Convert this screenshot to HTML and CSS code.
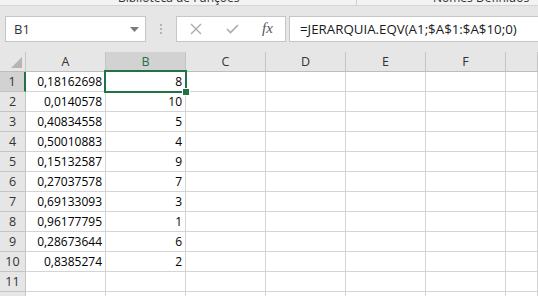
FILE: index.html
```html
<!DOCTYPE html>
<html>
<head>
<meta charset="utf-8">
<link rel="stylesheet" href="styles.css">
</head>
<body>
<div class="strip">
  <span class="grp grp1">Biblioteca de Funções</span>
  <span class="sep"></span>
  <span class="grp grp2">Nomes Definidos</span>
</div>
<div class="fbar">
  <div class="namebox">
    <span class="ref">B1</span>
    <svg class="dd" width="9" height="5" viewBox="0 0 9 5"><path d="M0 0H9L4.5 5Z" fill="#7a7a7a"/></svg>
  </div>
  <div class="dots"><i></i><i></i><i></i></div>
  <div class="btns">
    <svg class="ico" width="12" height="12" viewBox="0 0 12 12"><path d="M1 1L11 11M11 1L1 11" stroke="#ababab" stroke-width="1.4" fill="none"/></svg>
    <svg class="ico" width="13" height="10" viewBox="0 0 13 10"><path d="M1 5L4.5 8.5L12 1" stroke="#ababab" stroke-width="1.6" fill="none"/></svg>
    <span class="fx">fx</span>
  </div>
  <div class="formula">=JERARQUIA.EQV(A1;$A$1:$A$10;0)</div>
</div>
<div class="sheet">
  <div class="corner"><span class="tri"></span></div>
  <div class="ch">A</div><div class="ch sel">B</div><div class="ch">C</div><div class="ch">D</div><div class="ch">E</div><div class="ch">F</div><div class="ch"></div>

  <div class="rh selr">1</div><div class="c">0,18162698</div><div class="c act">8<span class="selbox"><span class="handle"></span></span></div><div class="c"></div><div class="c"></div><div class="c"></div><div class="c"></div><div class="c"></div>
  <div class="rh">2</div><div class="c">0,0140578</div><div class="c">10</div><div class="c"></div><div class="c"></div><div class="c"></div><div class="c"></div><div class="c"></div>
  <div class="rh">3</div><div class="c">0,40834558</div><div class="c">5</div><div class="c"></div><div class="c"></div><div class="c"></div><div class="c"></div><div class="c"></div>
  <div class="rh">4</div><div class="c">0,50010883</div><div class="c">4</div><div class="c"></div><div class="c"></div><div class="c"></div><div class="c"></div><div class="c"></div>
  <div class="rh">5</div><div class="c">0,15132587</div><div class="c">9</div><div class="c"></div><div class="c"></div><div class="c"></div><div class="c"></div><div class="c"></div>
  <div class="rh">6</div><div class="c">0,27037578</div><div class="c">7</div><div class="c"></div><div class="c"></div><div class="c"></div><div class="c"></div><div class="c"></div>
  <div class="rh">7</div><div class="c">0,69133093</div><div class="c">3</div><div class="c"></div><div class="c"></div><div class="c"></div><div class="c"></div><div class="c"></div>
  <div class="rh">8</div><div class="c">0,96177795</div><div class="c">1</div><div class="c"></div><div class="c"></div><div class="c"></div><div class="c"></div><div class="c"></div>
  <div class="rh">9</div><div class="c">0,28673644</div><div class="c">6</div><div class="c"></div><div class="c"></div><div class="c"></div><div class="c"></div><div class="c"></div>
  <div class="rh">10</div><div class="c">0,8385274</div><div class="c">2</div><div class="c"></div><div class="c"></div><div class="c"></div><div class="c"></div><div class="c"></div>
  <div class="rh">11</div><div class="c"></div><div class="c"></div><div class="c"></div><div class="c"></div><div class="c"></div><div class="c"></div><div class="c"></div>
  <div class="rh"></div><div class="c"></div><div class="c"></div><div class="c"></div><div class="c"></div><div class="c"></div><div class="c"></div><div class="c"></div>
</div>
</body>
</html>
```

FILE: styles.css
```css
* { box-sizing: border-box; }
html, body { margin: 0; padding: 0; }
body {
  width: 538px;
  height: 296px;
  overflow: hidden;
  background: #fff;
  font-family: "Open Sans", "Noto Sans", sans-serif;
  color: #222;
}
.strip {
  height: 6px;
  background: #f3f3f3;
  border-bottom: 1px solid #d5d5d5;
  display: flex;
  align-items: flex-end;
  overflow: hidden;
  font-size: 12px;
  line-height: 14px;
  color: #333;
}
.grp { white-space: nowrap; margin-bottom: 0.5px; }
.grp1 { margin-left: 118px; width: 238px; }
.sep { width: 1px; height: 6px; background: #cfcfcf; align-self: flex-start; }
.grp2 { margin-left: 76px; }
.fbar {
  height: 46px;
  background: #e6e6e6;
  display: flex;
  align-items: flex-start;
  padding-top: 10px;
}
.namebox {
  margin-left: 5px;
  width: 141px;
  height: 26px;
  background: #fff;
  border: 1px solid #c6c6c6;
  display: flex;
  align-items: center;
  justify-content: space-between;
  padding: 0 6px 0 8px;
}
.ref { font-size: 13px; color: #333; }
.dd { margin-top: 1px; }
.dots {
  width: 30px;
  height: 26px;
  display: flex;
  flex-direction: column;
  align-items: center;
  justify-content: center;
  gap: 2px;
}
.dots i { display: block; width: 2px; height: 2px; background: #b3b3b3; }
.btns {
  width: 110px;
  height: 26px;
  background: #fff;
  border: 1px solid #c6c6c6;
  display: flex;
  align-items: center;
  padding-left: 13px;
}
.btns .ico:first-child { margin-right: 24px; }
.btns .ico:nth-child(2) { margin-right: 23px; }
.fx {
  font-family: "Liberation Serif", "DejaVu Serif", serif;
  font-style: italic;
  font-size: 15px;
  color: #555;
  margin-top: -2px;
}
.formula {
  margin-left: 3px;
  flex: 1;
  height: 26px;
  background: #fff;
  border: 1px solid #c6c6c6;
  border-right: none;
  font-size: 13.3px;
  line-height: 24px;
  padding-left: 10px;
  color: #1a1a1a;
  white-space: nowrap;
}
.sheet {
  display: grid;
  grid-template-columns: 26px repeat(6, 80px) 1fr;
  grid-auto-rows: 20px;
  font-size: 12px;
  line-height: 19px;
}
.corner {
  background: #e6e6e6;
  border-right: 1px solid #c8c8c8;
  border-bottom: 1px solid #bdbdbd;
  position: relative;
}
.tri {
  position: absolute;
  right: 3px;
  bottom: 3px;
  width: 0;
  height: 0;
  border-left: 11px solid transparent;
  border-bottom: 11px solid #b5b5b5;
}
.ch {
  background: #e6e6e6;
  border-right: 1px solid #c4c4c4;
  border-bottom: 1px solid #bdbdbd;
  text-align: center;
  color: #333;
  font-size: 12.5px;
}
.ch.sel { background: #d2d2d2; color: #217346; }
.rh {
  background: #e6e6e6;
  border-right: 1px solid #c4c4c4;
  border-bottom: 1px solid #c4c4c4;
  text-align: center;
  color: #333;
  font-size: 12.5px;
  line-height: 20px;
}
.rh.selr { background: #d2d2d2; border-right: 2px solid #217346; }
.c {
  border-right: 1px solid #d4d4d4;
  border-bottom: 1px solid #d4d4d4;
  text-align: right;
  padding-right: 3px;
  line-height: 20px;
  color: #000;
  white-space: nowrap;
}
.act { position: relative; }
.selbox {
  position: absolute;
  left: -2px;
  top: -2px;
  width: 83px;
  height: 23px;
  border: 2px solid #217346;
}
.handle {
  position: absolute;
  right: -4px;
  bottom: -4px;
  width: 6px;
  height: 6px;
  background: #217346;
  border: 1px solid #fff;
  box-sizing: content-box;
  margin: -1px;
}
```
